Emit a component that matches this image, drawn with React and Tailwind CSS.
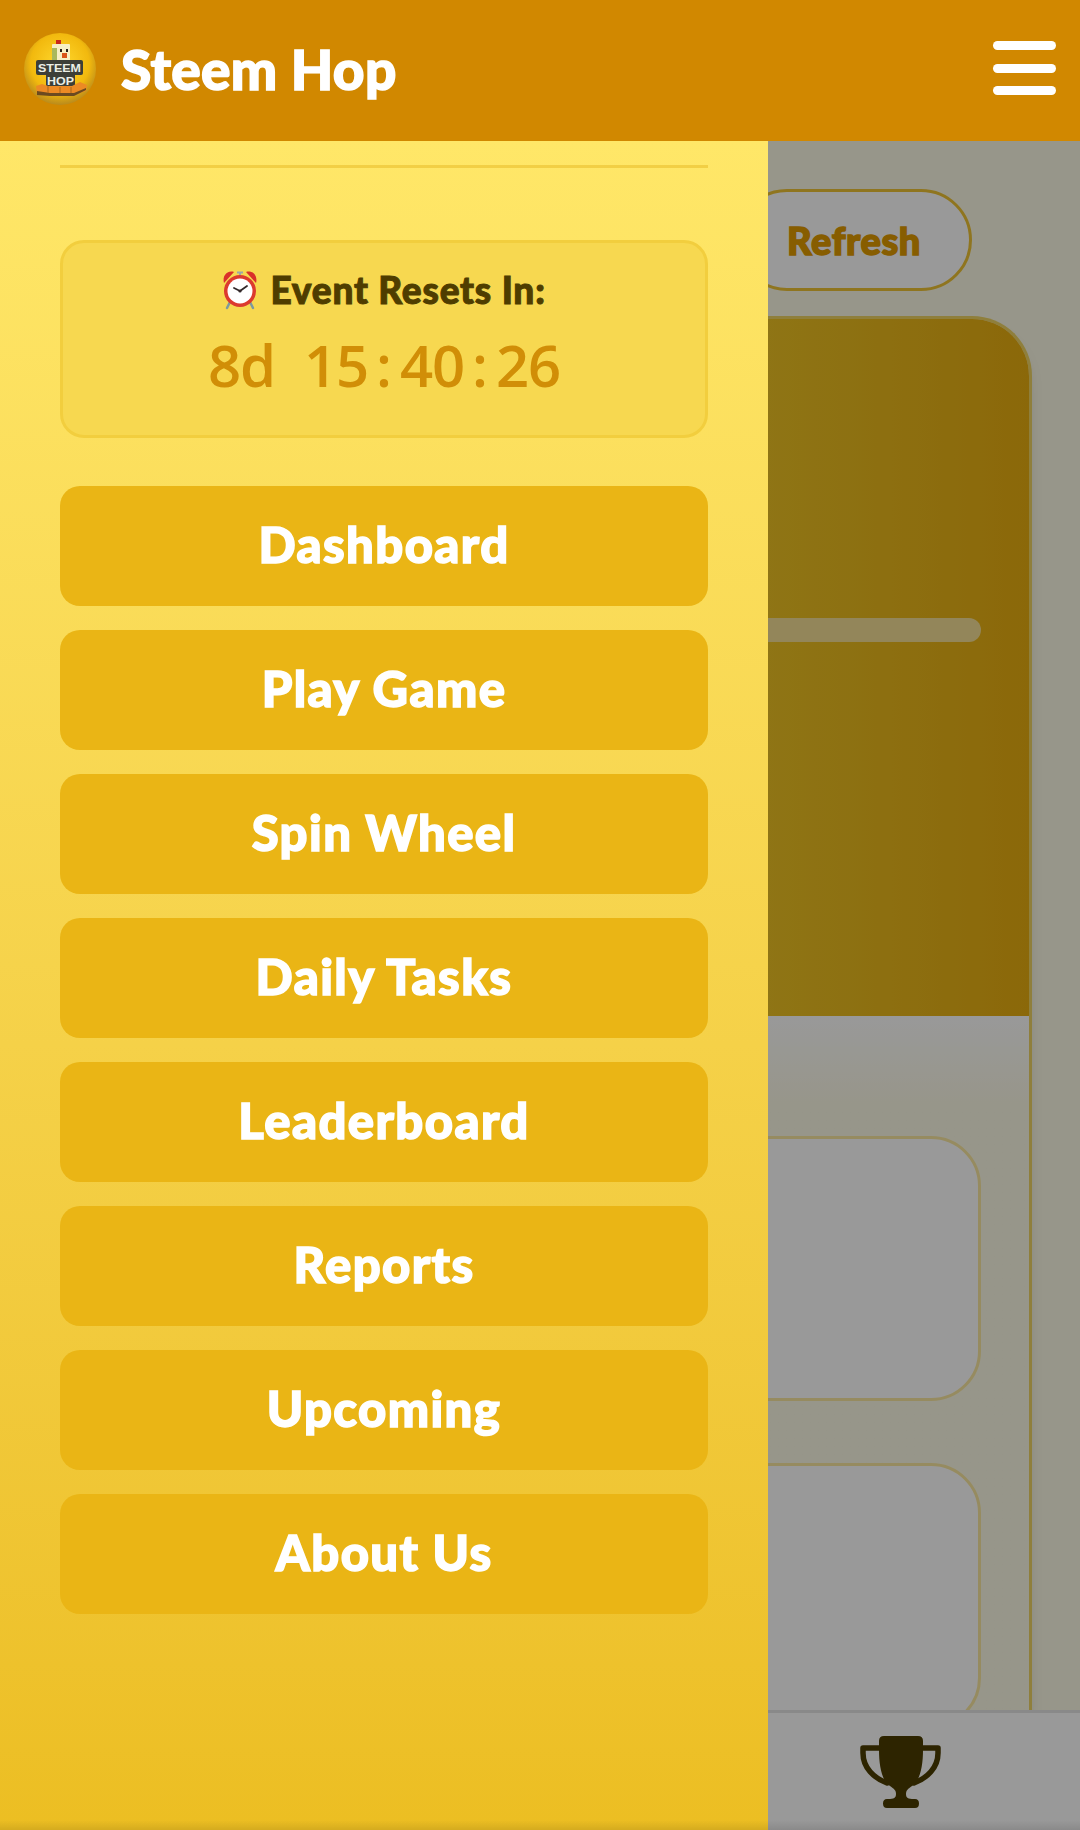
const menuItems = ["Dashboard", "Play Game", "Spin Wheel", "Daily Tasks", "Leaderboard", "Reports", "Upcoming", "About Us"];
const countdown = "8d 15:40:26";

function Logo() {
  return (
    <svg viewBox="0 0 72 72" className="w-[72px] h-[72px] shrink-0">
      <defs>
        <radialGradient id="ball" cx="50%" cy="42%" r="58%">
          <stop offset="0%" stopColor="#ffd92e" />
          <stop offset="70%" stopColor="#f2b90e" />
          <stop offset="100%" stopColor="#b98a1c" />
        </radialGradient>
      </defs>
      <circle cx="36" cy="36" r="36" fill="url(#ball)" />
      {/* chicken */}
      <rect x="32" y="7" width="5" height="4" fill="#c8281c" />
      <rect x="28" y="11" width="18" height="17" rx="1" fill="#f6efc4" />
      <rect x="28" y="15" width="5" height="12" fill="#a8b85c" />
      <rect x="36" y="16" width="2" height="3" fill="#2a2018" />
      <rect x="42" y="16" width="2" height="3" fill="#2a2018" />
      <rect x="38" y="20" width="5" height="5" fill="#d9541a" />
      <rect x="30" y="28" width="14" height="3" fill="#7a5a1c" />
      {/* sign */}
      <rect x="12" y="27" width="47" height="15" rx="2" fill="#3d3f38" />
      <rect x="22" y="40" width="29" height="14" rx="2" fill="#3d3f38" />
      <text x="35.5" y="39" textAnchor="middle" fontFamily="'Liberation Sans', sans-serif" fontWeight="700" fontSize="11.5" textLength="43" lengthAdjust="spacingAndGlyphs" fill="#ecefe6">STEEM</text>
      <text x="36.5" y="52" textAnchor="middle" fontFamily="'Liberation Sans', sans-serif" fontWeight="700" fontSize="11.5" textLength="27" lengthAdjust="spacingAndGlyphs" fill="#ecefe6">HOP</text>
      {/* bricks */}
      <path d="M12 53 L18 51 L24 53 H48 L56 49 L63 52 L62 58 L50 62 H26 L13 61 Z" fill="#ec8a24" />
      <path d="M13 58 L26 60 H50 L62 55 V57 L50 63 H26 L13 62 Z" fill="#6b4a20" />
      <path d="M24 53 V60 M36 54 V60 M47 54 V60" stroke="#a8661c" strokeWidth="1" />
    </svg>
  );
}

function AlarmClock() {
  return (
    <svg viewBox="0 0 36 40" className="w-[36px] h-[40px] shrink-0">
      <path d="M2 13 C0 6 5 0 12 2 Z" fill="#d9302a" />
      <path d="M34 13 C36 6 31 0 24 2 Z" fill="#d9302a" />
      <path d="M18 3 V6 M15 2.5 H21" stroke="#9aa8a8" strokeWidth="2" />
      <path d="M8 32 L5 38 M28 32 L31 38" stroke="#7d9a9e" strokeWidth="2.5" strokeLinecap="round" />
      <circle cx="18" cy="21" r="16" fill="#dc3a2e" />
      <circle cx="18" cy="21" r="12.5" fill="#ffffff" />
      <path d="M18 21 L12 18 M18 21 L25 16" stroke="#33292a" strokeWidth="1.8" strokeLinecap="round" />
      <circle cx="18" cy="21" r="1.6" fill="#33292a" />
    </svg>
  );
}

function Trophy() {
  return (
    <svg viewBox="0 0 81 72" className="w-[81px] h-[72px]">
      <path d="M20 12 H3 V17 C3 32 14 42 27 47" fill="none" stroke="#4c3d00" strokeWidth="5.5" strokeLinejoin="round" strokeLinecap="round" />
      <path d="M61 12 H78 V17 C78 32 67 42 54 47" fill="none" stroke="#4c3d00" strokeWidth="5.5" strokeLinejoin="round" strokeLinecap="round" />
      <path d="M24 0 H58 Q63 0 63 5 V14 C63 30 60 45 52 50 C48 53 46 54 46 58 C46 62 48 63 54 63 H55 Q59 63 59 67.5 Q59 72 55 72 H27 Q23 72 23 67.5 Q23 63 27 63 H28 C34 63 36 62 36 58 C36 54 34 53 30 50 C22 45 19 30 19 14 V5 Q19 0 24 0 Z" fill="#4c3d00" />
    </svg>
  );
}

function Drawer() {
  return (
    <aside className="absolute left-0 top-0 bottom-0 w-[768px] px-[60px] pt-[24px] bg-gradient-to-b from-[#ffe768] to-[#ecbe22]">
      <div className="h-[3px] bg-[#f2cf45]"></div>
      <div className="mt-[72px] h-[198px] flex flex-col items-center pt-[27px] rounded-[24px] border-[3px] border-[#f2ce3e] bg-[#f7d850]">
        <div className="flex items-center gap-[12px] h-[40px]">
          <AlarmClock />
          <span className="text-[37px] leading-[40px] font-black tracking-[0.8px] text-[#4f3d00] [-webkit-text-stroke:1px_#4f3d00]">Event Resets In:</span>
        </div>
        <div className="mt-[23px] flex text-[58px] leading-[64px] font-semibold text-[#d18e07] font-['Open_Sans',sans-serif]">
          {[...countdown].map((ch, i) => (
            <span key={i} className="w-[32px] text-center">{ch}</span>
          ))}
        </div>
      </div>
      <nav className="mt-[48px] flex flex-col gap-[24px]">
        {menuItems.map((item) => (
          <button key={item} className="h-[120px] rounded-[20px] bg-[#eab515] text-white text-[49px] font-black tracking-[1.4px] [-webkit-text-stroke:1.5px_white] pb-[2px]">
            {item}
          </button>
        ))}
      </nav>
    </aside>
  );
}

export default function App() {
  return (
    <div className="relative h-[1830px] w-[1080px] overflow-hidden flex flex-col bg-[#fcfae6] font-['Lato',sans-serif]">
      <header className="relative z-10 h-[141px] shrink-0 flex items-center justify-between px-[24px] bg-[#d18800]">
        <div className="flex items-center gap-[25px] mb-[3px]">
          <Logo />
          <h1 className="text-[55px] leading-none font-black tracking-[0.3px] text-white [-webkit-text-stroke:1.5px_white]">Steem Hop</h1>
        </div>
        <button className="flex flex-col gap-[13.5px] w-[63px] mb-[5px]">
          <span className="h-[9px] rounded-full bg-white"></span>
          <span className="h-[9px] rounded-full bg-white"></span>
          <span className="h-[9px] rounded-full bg-white"></span>
        </button>
      </header>

      <div className="relative flex-1 min-h-0 flex flex-col">
        <main className="flex-1 min-h-0 overflow-hidden px-[48px] pt-[48px]">
          <div className="flex justify-end pr-[60px]">
            <button className="h-[102px] px-[48px] rounded-full border-[3px] border-[#eec335] bg-white text-[#e19b00] text-[38px] font-black tracking-[0.6px] [-webkit-text-stroke:1.5px_#e19b00]">
              Refresh
            </button>
          </div>
          <section className="mt-[25px] rounded-t-[60px] border-[3px] border-b-0 border-[#eed464] shadow-lg bg-[#fcfae6] h-[1400px]">
            <div className="h-[697px] rounded-t-[57px] px-[48px] pt-[299px] bg-gradient-to-r from-[#eec323] from-[73%] to-[#e8ae10]">
              <div className="h-[24px] rounded-full bg-[#f5e096]"></div>
            </div>
            <div className="px-[48px] pt-[120px] flex flex-col gap-[62px] bg-gradient-to-b from-white to-[#fcfae6] to-[90px]">
              <div className="h-[265px] rounded-[50px] border-[3px] border-[#fbe8a0] bg-white"></div>
              <div className="h-[265px] rounded-[50px] border-[3px] border-[#fbe8a0] bg-white"></div>
            </div>
          </section>
        </main>
        <footer className="h-[120px] shrink-0 grid grid-cols-3 items-center justify-items-center border-t-[3px] border-[#e5e5e5] bg-white">
          <div></div>
          <div></div>
          <Trophy />
        </footer>
        <div className="absolute inset-0 bg-black/40"></div>
        <Drawer />
        <div className="absolute left-0 right-0 bottom-0 h-[10px] bg-gradient-to-b from-transparent to-black/10"></div>
      </div>
    </div>
  );
}
